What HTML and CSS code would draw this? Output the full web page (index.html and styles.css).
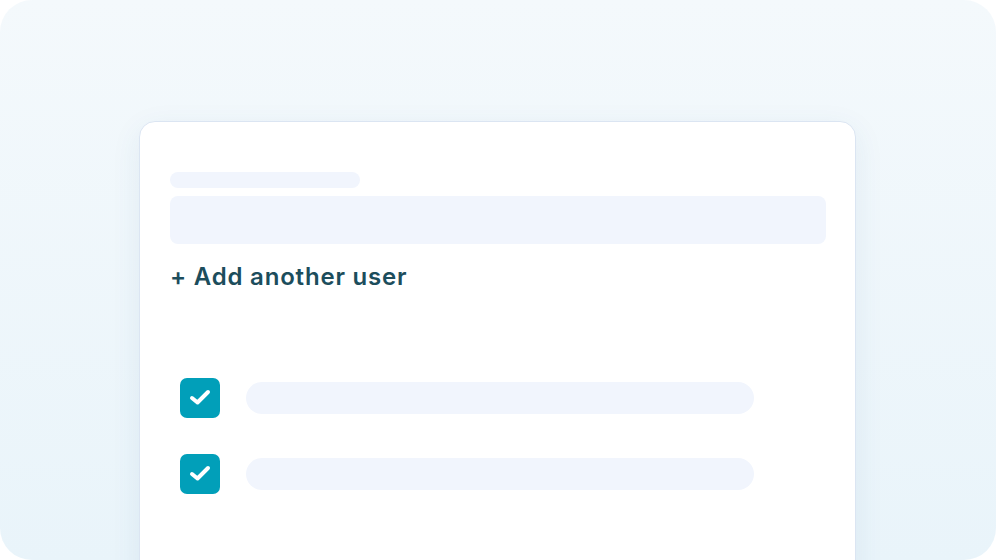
FILE: index.html
```html
<!DOCTYPE html>
<html lang="en">
<head>
    <meta charset="UTF-8">
    <meta name="viewport" content="width=device-width, initial-scale=1.0">
    <link rel="stylesheet" href="styles.css">
    <title>Add users</title>
</head>
<body>
    <div class="frame">
        <div class="card">
            <div class="skeleton skeleton--label"></div>
            <div class="skeleton skeleton--input"></div>
            <div class="add-user">+ Add another user</div>

            <!-- Danh sach -->
            <div class="checklist">
                <div class="check-row">
                    <span class="checkbox">
                        <svg width="40" height="40" viewBox="0 0 40 40"><path d="M12 20 L17.5 24.5 L28 14" fill="none" stroke="#fff" stroke-width="4" stroke-linecap="round" stroke-linejoin="round"/></svg>
                    </span>
                    <div class="skeleton skeleton--line"></div>
                </div>
                <div class="check-row">
                    <span class="checkbox">
                        <svg width="40" height="40" viewBox="0 0 40 40"><path d="M12 20 L17.5 24.5 L28 14" fill="none" stroke="#fff" stroke-width="4" stroke-linecap="round" stroke-linejoin="round"/></svg>
                    </span>
                    <div class="skeleton skeleton--line"></div>
                </div>
            </div>
        </div>
    </div>
</body>
</html>
```

FILE: styles.css
```css
body {
    margin: 0;
    padding: 0;
    background: #ffffff;
    font-family: Inter, "Noto Sans", sans-serif;
}

/* Khung ngoai */
.frame {
    width: 996px;
    height: 560px;
    border-radius: 32px;
    overflow: hidden;
    background: linear-gradient(180deg, #f4f9fc 0%, #e9f4fa 100%);
    padding: 121px 0 0 139px;
    box-sizing: border-box;
}

/* The trang */
.card {
    width: 717px;
    height: 480px;
    box-sizing: border-box;
    background: #ffffff;
    border: 1px solid #dbe5f2;
    border-radius: 16px;
    box-shadow: 0 8px 30px rgba(40, 90, 140, 0.08);
    padding: 50px 29px 0 30px;
    display: flex;
    flex-direction: column;
}

.skeleton {
    background: #f1f5fd;
}

.skeleton--label {
    width: 190px;
    height: 16px;
    border-radius: 8px;
}

.skeleton--input {
    margin-top: 8px;
    height: 48px;
    border-radius: 8px;
}

.add-user {
    margin-top: 18px;
    font-size: 24px;
    line-height: 30px;
    font-weight: 600;
    letter-spacing: 0.8px;
    color: #1c4d5c;
}

.checklist {
    margin-top: 86px;
    padding-left: 10px;
    display: flex;
    flex-direction: column;
    gap: 36px;
}

.check-row {
    display: flex;
    align-items: center;
    gap: 26px;
}

.checkbox {
    width: 40px;
    height: 40px;
    border-radius: 7px;
    background: #019fb9;
    display: flex;
}

.skeleton--line {
    width: 508px;
    height: 32px;
    border-radius: 16px;
}
```
